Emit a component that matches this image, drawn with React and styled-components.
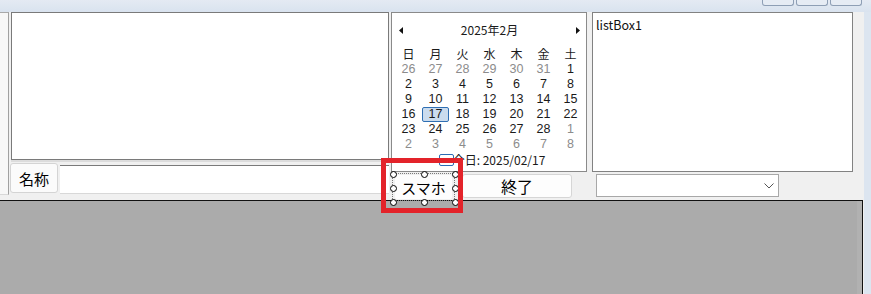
import React from 'react';
import styled, { createGlobalStyle } from 'styled-components';

const GlobalStyle = createGlobalStyle`
  html, body { margin: 0; padding: 0; }
  body { font-family: "Noto Sans CJK JP", "Noto Sans", sans-serif; }
  * { box-sizing: border-box; }
`;

const weeks = [
  [26, 27, 28, 29, 30, 31, 1],
  [2, 3, 4, 5, 6, 7, 8],
  [9, 10, 11, 12, 13, 14, 15],
  [16, 17, 18, 19, 20, 21, 22],
  [23, 24, 25, 26, 27, 28, 1],
  [2, 3, 4, 5, 6, 7, 8],
];
const dayNames = ['日', '月', '火', '水', '木', '金', '土'];

function isOther(row, value) {
  if (row === 0) return value > 7;
  if (row >= 4) return value < 15;
  return false;
}

export default function App() {
  return (
    <Screen>
      <GlobalStyle />
      <TopBar>
        <TabButton />
        <TabButton />
        <TabButton />
      </TopBar>
      <Body>
        <Main>
          <Columns>
            <LeftEdge />
            <LeftCol>
              <TextArea />
              <NameRow>
                <NameButton>名称</NameButton>
                <NameInput />
              </NameRow>
            </LeftCol>

            <CalendarCol>
              <Calendar>
                <CalHeader>
                  <Arrow viewBox="0 0 4 7"><path d="M4 0 L0 3.5 L4 7 Z" /></Arrow>
                  <MonthTitle>2025年2月</MonthTitle>
                  <Arrow viewBox="0 0 4 7"><path d="M0 0 L4 3.5 L0 7 Z" /></Arrow>
                </CalHeader>
                <DayNames>
                  {dayNames.map((d) => <DayName key={d}>{d}</DayName>)}
                </DayNames>
                <DateGrid>
                  {weeks.map((week, r) =>
                    week.map((v, c) => (
                      <DateCell
                        key={`${r}-${c}`}
                        $other={isOther(r, v)}
                        $selected={r === 3 && v === 17}
                      >
                        {v}
                      </DateCell>
                    ))
                  )}
                </DateGrid>
                <TodayRow>
                  <TodayMark />
                  <span>今日: 2025/02/17</span>
                </TodayRow>
              </Calendar>
              <ButtonRow>
                <Selection>
                  <RedFrame />
                  <Handle style={{ left: -3, top: -3 }} />
                  <Handle style={{ left: 28, top: -3 }} />
                  <Handle style={{ left: 59, top: -3 }} />
                  <Handle style={{ left: -3, top: 11 }} />
                  <Handle style={{ left: 59, top: 11 }} />
                  <Handle style={{ left: -3, top: 25 }} />
                  <Handle style={{ left: 28, top: 25 }} />
                  <Handle style={{ left: 59, top: 25 }} />
                  <SmartButton>スマホ</SmartButton>
                </Selection>
                <ExitButton>終了</ExitButton>
              </ButtonRow>
            </CalendarCol>

            <ListCol>
              <ListBox>listBox1</ListBox>
              <Combo>
                <svg width="10" height="6" viewBox="0 0 10 6">
                  <path d="M0.5 0.5 L5 5 L9.5 0.5" fill="none" stroke="#555" strokeWidth="1" />
                </svg>
              </Combo>
            </ListCol>
          </Columns>
          <Panel />
        </Main>
      </Body>
    </Screen>
  );
}

const Screen = styled.div`
  width: 871px;
  height: 294px;
  overflow: hidden;
  background: #dce5f0;
  color: #111;
`;

const TopBar = styled.div`
  height: 12px;
  display: flex;
  justify-content: flex-end;
  align-items: flex-start;
  gap: 2px;
  padding-right: 9px;
  background: linear-gradient(#e4eaf3, #d9e3ef);
`;

const TabButton = styled.div`
  width: 32px;
  height: 6px;
  border: 1px solid #8e9fb5;
  border-top: none;
  border-radius: 0 0 3px 3px;
  background: #e6ecf4;
`;

const Body = styled.div`
  display: flex;
`;

const Main = styled.div`
  width: 864px;
  height: 282px;
  background: #f0f0f0;
  display: flex;
  flex-direction: column;
`;

const Columns = styled.div`
  height: 188px;
  flex-shrink: 0;
  display: flex;
  align-items: flex-start;
`;

const LeftEdge = styled.div`
  width: 9px;
  height: 183px;
  border-top: 1px solid #a9a9a9;
  border-right: 1px solid #a0a0a0;
  border-bottom: 1px solid #d8d8d8;
  background: #f7f7f7;
`;

const LeftCol = styled.div`
  width: 379px;
  margin-left: 1px;
  display: flex;
  flex-direction: column;
`;

const TextArea = styled.div`
  margin-left: 1px;
  width: 378px;
  height: 148px;
  background: #fff;
  border: 1px solid #7a7a7a;
  box-shadow: 0 2px 0 #dcdcdc;
`;

const NameRow = styled.div`
  margin-top: 3px;
  display: flex;
  align-items: flex-start;
  gap: 2px;
`;

const NameButton = styled.div`
  width: 48px;
  height: 30px;
  display: flex;
  align-items: center;
  justify-content: center;
  font-size: 15px;
  line-height: 1;
  background: #fbfbfb;
  border: 1px solid #d4d4d4;
  border-radius: 3px;
  color: #000;
`;

const NameInput = styled.div`
  margin-top: 2px;
  width: 329px;
  height: 29px;
  background: #fff;
  border-top: 1px solid #7a7a7a;
  border-bottom: 1px solid #d8d8d8;
`;

const CalendarCol = styled.div`
  width: 196px;
  margin-left: 2px;
  display: flex;
  flex-direction: column;
`;

const Calendar = styled.div`
  height: 160px;
  background: #fff;
  border: 1px solid #8a8a8a;
  padding: 9px 1px 0 3px;
  font-size: 12px;
  color: #1a1a1a;
`;

const CalHeader = styled.div`
  height: 16px;
  display: flex;
  align-items: center;
  justify-content: space-between;
  padding: 0 5px 0 4px;
`;

const Arrow = styled.svg`
  width: 4px;
  height: 7px;
  fill: #111;
`;

const MonthTitle = styled.span`
  font-size: 12px;
  line-height: 1;
`;

const DayNames = styled.div`
  margin-top: 7px;
  height: 17px;
  display: grid;
  grid-template-columns: repeat(7, 27px);
  align-items: center;
`;

const DayName = styled.span`
  text-align: center;
  font-size: 12px;
  line-height: 1;
`;

const DateGrid = styled.div`
  display: grid;
  grid-template-columns: repeat(7, 27px);
  grid-auto-rows: 15px;
`;

const DateCell = styled.span`
  display: flex;
  align-items: center;
  justify-content: center;
  font-family: "Liberation Sans", Arial, sans-serif;
  font-size: 12.5px;
  line-height: 1;
  color: ${(p) => (p.$other ? '#8c8c8c' : '#1a1a1a')};
  background: ${(p) => (p.$selected ? '#cbdcee' : 'transparent')};
  border: 1px solid ${(p) => (p.$selected ? '#2f6fb3' : 'transparent')};
  border-radius: ${(p) => (p.$selected ? '2px' : '0')};
`;

const TodayRow = styled.div`
  height: 16px;
  display: flex;
  align-items: center;
  justify-content: center;
  padding-left: 4px;
  font-size: 12px;
  line-height: 1;
`;

const TodayMark = styled.span`
  width: 15px;
  height: 12px;
  border: 1px solid #2b6cb5;
  border-radius: 2px;
  margin-right: -1px;
`;

const ButtonRow = styled.div`
  margin-top: 1px;
  display: flex;
  align-items: flex-start;
`;

const Selection = styled.div`
  position: relative;
  margin-left: 1px;
  width: 63px;
  height: 28px;
  border: 1px dotted #7a7a7a;
  padding: 1px 2px;
`;

const Handle = styled.span`
  position: absolute;
  width: 7px;
  height: 7px;
  border: 1px solid #000;
  border-radius: 50%;
  background: #fff;
  z-index: 2;
`;

const RedFrame = styled.span`
  position: absolute;
  left: -12px;
  top: -16px;
  width: 82px;
  height: 55px;
  border: 5px solid #e3232a;
  z-index: 3;
`;

const SmartButton = styled.div`
  height: 24px;
  display: flex;
  align-items: center;
  justify-content: center;
  font-size: 15px;
  line-height: 1;
  background: #fdfdfd;
  border-radius: 2px;
  color: #000;
`;

const ExitButton = styled.div`
  margin-left: 7px;
  margin-top: 1px;
  width: 110px;
  height: 24px;
  display: flex;
  align-items: center;
  justify-content: center;
  font-size: 16px;
  line-height: 1;
  background: #fdfdfd;
  border: 1px solid #d6d6d6;
  border-radius: 3px;
  color: #000;
`;

const ListCol = styled.div`
  width: 261px;
  margin-left: 5px;
  display: flex;
  flex-direction: column;
`;

const ListBox = styled.div`
  height: 160px;
  background: #fff;
  border: 1px solid #828282;
  padding: 4px 3px;
  font-size: 12.5px;
  line-height: 15px;
  color: #111;
`;

const Combo = styled.div`
  margin-top: 2px;
  margin-left: 4px;
  width: 183px;
  height: 23px;
  background: #fff;
  border: 1px solid #a8a8a8;
  display: flex;
  align-items: center;
  justify-content: flex-end;
  padding-right: 4px;
`;

const Panel = styled.div`
  width: 863px;
  height: 94px;
  flex-shrink: 0;
  background: #ababab;
  border-top: 1px solid #111;
  border-right: 1px solid #111;
  box-shadow: inset -5px 0 0 #b1b1b1;
`;
